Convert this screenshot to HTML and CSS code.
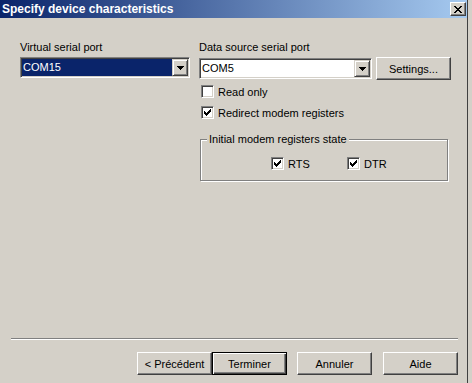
FILE: index.html
```html
<!DOCTYPE html>
<html lang="en">
<head>
  <meta charset="UTF-8">
  <meta name="viewport" content="width=device-width, initial-scale=1.0">
  <title>Specify device characteristics</title>
  <link rel="stylesheet" href="styles.css">
</head>
<body>
  <div class="screen">
    <div class="window">
      <div class="titlebar">
        <span class="title">Specify device characteristics</span>
        <span class="close">
          <svg width="8" height="7" viewBox="0 0 8 7" shape-rendering="crispEdges"><path d="M0 0h2v1h-2zM6 0h2v1h-2zM1 1h2v1h-2zM5 1h2v1h-2zM2 2h4v1h-4zM3 3h2v1h-2zM2 4h4v1h-4zM1 5h2v1h-2zM5 5h2v1h-2zM0 6h2v1h-2zM6 6h2v1h-2z" fill="#000"/></svg>
        </span>
      </div>

      <div class="body">
        <div class="fields">
          <div class="col col-left">
            <div class="label">Virtual serial port</div>
            <div class="combo">
              <span class="value selected">COM15</span>
              <span class="drop"><svg width="7" height="4" viewBox="0 0 7 4" shape-rendering="crispEdges"><path d="M0 0h7v1h-7zM1 1h5v1h-5zM2 2h3v1h-3zM3 3h1v1h-1z" fill="#000"/></svg></span>
            </div>
          </div>

          <div class="col col-right">
            <div class="label">Data source serial port</div>
            <div class="port-row">
              <div class="combo">
                <span class="value">COM5</span>
                <span class="drop"><svg width="7" height="4" viewBox="0 0 7 4" shape-rendering="crispEdges"><path d="M0 0h7v1h-7zM1 1h5v1h-5zM2 2h3v1h-3zM3 3h1v1h-1z" fill="#000"/></svg></span>
              </div>
              <button class="btn">Settings...</button>
            </div>

            <label class="check first"><span class="box"></span>Read only</label>
            <label class="check second"><span class="box"><svg width="7" height="7" viewBox="0 0 7 7" shape-rendering="crispEdges"><path d="M6 0h1v1h-1zM5 1h2v1h-2zM0 2h1v1h-1zM4 2h3v1h-3zM0 3h2v1h-2zM3 3h3v1h-3zM0 4h5v1h-5zM1 5h3v1h-3zM2 6h1v1h-1z" fill="#000"/></svg></span>Redirect modem registers</label>

            <div class="group">
              <span class="legend">Initial modem registers state</span>
              <div class="group-items">
                <label class="check"><span class="box"><svg width="7" height="7" viewBox="0 0 7 7" shape-rendering="crispEdges"><path d="M6 0h1v1h-1zM5 1h2v1h-2zM0 2h1v1h-1zM4 2h3v1h-3zM0 3h2v1h-2zM3 3h3v1h-3zM0 4h5v1h-5zM1 5h3v1h-3zM2 6h1v1h-1z" fill="#000"/></svg></span>RTS</label>
                <label class="check"><span class="box"><svg width="7" height="7" viewBox="0 0 7 7" shape-rendering="crispEdges"><path d="M6 0h1v1h-1zM5 1h2v1h-2zM0 2h1v1h-1zM4 2h3v1h-3zM0 3h2v1h-2zM3 3h3v1h-3zM0 4h5v1h-5zM1 5h3v1h-3zM2 6h1v1h-1z" fill="#000"/></svg></span>DTR</label>
              </div>
            </div>
          </div>
        </div>

        <div class="separator"></div>

        <div class="buttons">
          <button class="btn">&lt; Précédent</button>
          <button class="btn default">Terminer</button>
          <button class="btn gap">Annuler</button>
          <button class="btn gap-wide">Aide</button>
        </div>
      </div>
    </div>
    <div class="edge"></div>
  </div>
</body>
</html>
```

FILE: styles.css
```css
body {
  margin: 0;
  font-family: "Liberation Sans", Arial, sans-serif;
  font-size: 11px;
  color: #000;
  background-color: #d4d0c8;
}
.screen {
  display: flex;
  width: 472px;
  height: 383px;
  overflow: hidden;
}
.window {
  width: 467px;
  display: flex;
  flex-direction: column;
  border-right: 1px solid #404040;
}
.edge {
  flex: 1;
  background-color: #d4d0c8;
}
.titlebar {
  height: 18px;
  display: flex;
  align-items: center;
  justify-content: space-between;
  padding: 0 1px 0 2px;
  background: linear-gradient(to right, #0a246a, #a6caf0);
  color: #fff;
  font-size: 12px;
  font-weight: bold;
}
.close {
  width: 16px;
  height: 14px;
  box-sizing: border-box;
  display: flex;
  align-items: center;
  justify-content: center;
  background-color: #d4d0c8;
  border: 1px solid;
  border-color: #fff #404040 #404040 #fff;
  box-shadow: inset -1px -1px #808080;
}
.body {
  flex: 1;
  display: flex;
  flex-direction: column;
  padding: 23px 9px 8px 11px;
}
.fields {
  display: flex;
  gap: 9px;
  padding-left: 9px;
}
.col-left {
  width: 170px;
}
.col-right {
  width: 252px;
}
.label {
  height: 13px;
  line-height: 13px;
  margin-bottom: 3px;
}
.col-left .combo {
  margin-top: 1px;
}
.combo {
  height: 21px;
  box-sizing: border-box;
  display: flex;
  padding: 1px;
  background-color: #fff;
  border: 1px solid;
  border-color: #808080 #fff #fff #808080;
  box-shadow: inset 1px 1px #404040, inset -1px -1px #d4d0c8;
}
.value {
  flex: 1;
  padding-left: 1px;
  line-height: 17px;
}
.value.selected {
  background-color: #0a246a;
  color: #fff;
}
.drop {
  width: 16px;
  height: 17px;
  box-sizing: border-box;
  display: flex;
  align-items: center;
  justify-content: center;
  background-color: #d4d0c8;
  border: 1px solid;
  border-color: #d4d0c8 #404040 #404040 #d4d0c8;
  box-shadow: inset 1px 1px #fff, inset -1px -1px #808080;
}
.port-row {
  display: flex;
  align-items: center;
  gap: 4px;
}
.port-row .combo {
  width: 173px;
}
.btn {
  width: 75px;
  height: 23px;
  padding: 0;
  font-family: inherit;
  font-size: 11px;
  color: #000;
  background-color: #d4d0c8;
  border: 1px solid;
  border-color: #fff #404040 #404040 #fff;
  box-shadow: inset -1px -1px #808080;
}
.btn.default {
  border-color: #000;
  box-shadow: inset 1px 1px #fff, inset -1px -1px #404040, inset -2px -2px #808080;
}
.btn.gap {
  margin-left: 10px;
}
.btn.gap-wide {
  margin-left: 11px;
}
.check {
  display: flex;
  align-items: center;
  gap: 4px;
  height: 13px;
}
.check.first {
  margin: 5px 0 0 2px;
}
.check.second {
  margin: 8px 0 0 2px;
}
.box {
  width: 13px;
  height: 13px;
  box-sizing: border-box;
  display: flex;
  align-items: center;
  justify-content: center;
  background-color: #fff;
  border: 1px solid;
  border-color: #808080 #fff #fff #808080;
  box-shadow: inset 1px 1px #404040, inset -1px -1px #d4d0c8;
}
.group {
  position: relative;
  margin: 20px 0 0 1px;
  width: 248px;
  height: 42px;
  box-sizing: border-box;
  border: 1px solid #808080;
  box-shadow: inset 1px 1px #fff, 1px 1px #fff;
}
.legend {
  position: absolute;
  top: -7px;
  left: 6px;
  padding: 0 2px;
  line-height: 13px;
  background-color: #d4d0c8;
}
.group-items {
  display: grid;
  grid-template-columns: 76px auto;
  padding: 17px 0 0 70px;
}
.separator {
  margin-top: auto;
  height: 0;
  border-top: 1px solid #808080;
  border-bottom: 1px solid #fff;
}
.buttons {
  display: flex;
  justify-content: flex-end;
  margin-top: 12px;
}
```
